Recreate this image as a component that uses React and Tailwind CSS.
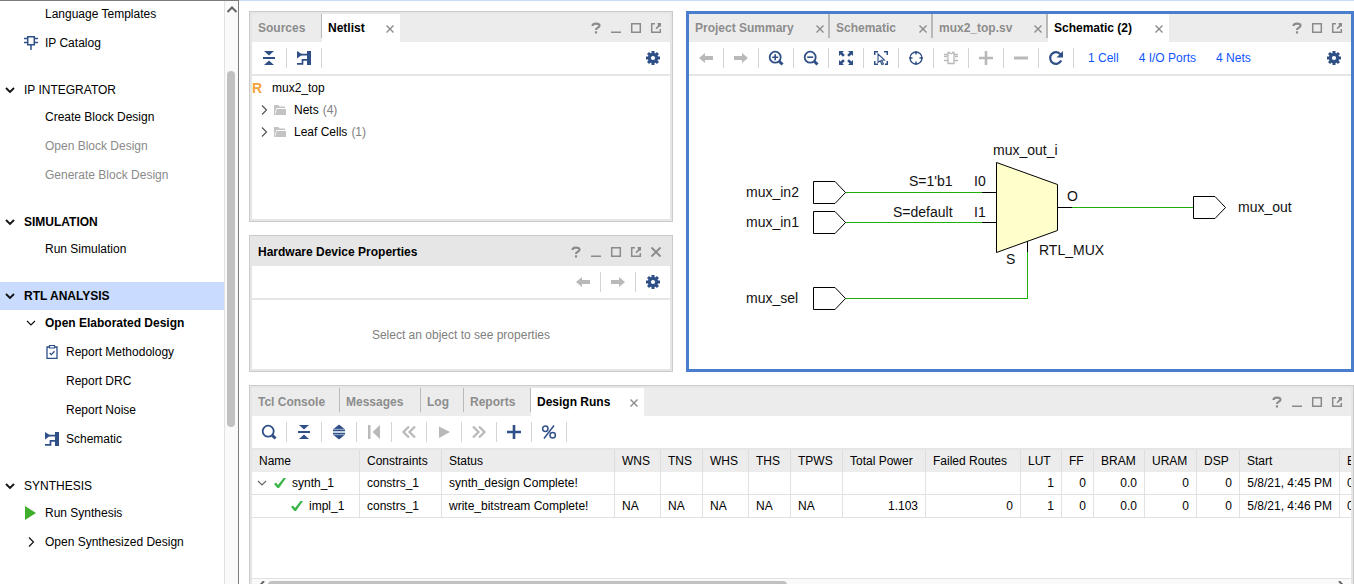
import React from "react";

const NAVY = "#2f4f87";
const GRAY = "#b9b9b9";

function Svg({ size = 16, className = "", children }) {
  return (
    <svg width={size} height={size} viewBox={`0 0 ${size} ${size}`} className={`block shrink-0 ${className}`} aria-hidden="true">
      {children}
    </svg>
  );
}

/* ---------- icons ---------- */

const Chevron = ({ dir = "down", bold = false, color = "#111" }) => (
  <Svg size={12}>
    <path
      d={dir === "down" ? "M2 4l4 4 4-4" : "M4 1.5L8.5 6 4 10.5"}
      fill="none"
      stroke={color}
      strokeWidth={bold ? 1.8 : 1.2}
    />
  </Svg>
);

const ChipIcon = ({ color = NAVY, pin = false }) => (
  <Svg>
    {pin ? (
      <path d="M4.700 1.700h6.600v8H4.700zM1 3.500h4M1 7.500h4M11 3.500h4M11 7.500h4M8 10v5" fill="none" stroke={color} strokeWidth="1.500" />
    ) : (
      <path d="M5 2.500h1.500c0 1.600 3 1.600 3 0H11v11H5zM1 4.500h4M1 6.500h3M1 10.500h4M11 4.500h4M12 6.500h3M11 10.500h4" fill="none" stroke={color} strokeWidth="1.300" />
    )}
  </Svg>
);

const ClipboardIcon = () => (
  <Svg>
    <path d="M3 3h10v11.300H3z" fill="none" stroke={NAVY} strokeWidth="1.300" />
    <path d="M5.500 1.500h5v2.500h-5z" fill="#fff" stroke={NAVY} strokeWidth="1.200" />
    <path d="M5.700 9l1.600 1.600 3.200-3.400" fill="none" stroke={NAVY} strokeWidth="1.300" />
  </Svg>
);

const SchematicIcon = () => (
  <Svg>
    <path d="M1 1l5.500 3.500L1 8.500z" fill={NAVY} />
    <path d="M11 1h4v14h-4z" fill={NAVY} />
    <path d="M5 4.700h6.500M1 13.800h5.500V9.800h5" fill="none" stroke={NAVY} strokeWidth="1.700" />
  </Svg>
);

const PlayIcon = ({ color = "#3fae2a", small = false }) => (
  <Svg>
    <path d={small ? "M3 2.500l11 5.500-11 6z" : "M2 1l11 7-11 7z"} fill={color} />
  </Svg>
);

const CollapseIcon = () => (
  <Svg>
    <path d="M3 1h10L8 5.500zM3 15h10L8 10.500zM2 7h12v2H2z" fill={NAVY} />
  </Svg>
);

const ExpandIcon = () => (
  <Svg>
    <path d="M8 .5L13.500 5h-11zM8 15.500L13.500 11h-11zM2 5.500h12v2H2zM2 8.500h12v2H2z" fill={NAVY} />
    <path d="M2 8h12" stroke="#fff" strokeWidth="1" />
    <path d="M2 5.200h12M2 10.800h12" stroke="#8fa2c2" strokeWidth=".6" />
  </Svg>
);

const GearIcon = () => (
  <Svg>
    <g fill={NAVY}>
      <path d="M6.500 1h3v14h-3z" />
      <path d="M6.500 1h3v14h-3z" transform="rotate(45 8 8)" />
      <path d="M6.500 1h3v14h-3z" transform="rotate(90 8 8)" />
      <path d="M6.500 1h3v14h-3z" transform="rotate(135 8 8)" />
      <circle cx="8" cy="8" r="5.200" />
    </g>
    <circle cx="8" cy="8" r="2.100" fill="#fff" />
  </Svg>
);

const ArrowIcon = ({ dir }) => (
  <Svg>
    <path d={dir === "left" ? "M1 8l6-5v3h8v4H7v3z" : "M15 8L9 3v3H1v4h8v3z"} fill={GRAY} />
  </Svg>
);

const MagnifierIcon = ({ mark }) => (
  <Svg>
    <circle cx="7.200" cy="7.200" r="5.500" fill="none" stroke={NAVY} strokeWidth="1.800" />
    <path d="M11.200 11.200l3.300 3.300" stroke={NAVY} strokeWidth="3" />
    {mark === "plus" && <path d="M7.200 4.200v6M4.200 7.200h6" stroke={NAVY} strokeWidth="1.600" />}
    {mark === "minus" && <path d="M4.200 7.200h6" stroke={NAVY} strokeWidth="1.600" />}
  </Svg>
);

const FitIcon = () => (
  <Svg>
    <path
      d="M1 1h5L4.400 2.600 6.800 5 5 6.800 2.600 4.400 1 6zM15 1v5l-1.600-1.600L11 6.800 9.200 5l2.400-2.400L10 1zM1 15v-5l1.600 1.600L5 9.200 6.800 11l-2.400 2.400L6 15zM15 15h-5l1.600-1.600L9.200 11 11 9.200l2.400 2.400L15 10z"
      fill={NAVY}
    />
  </Svg>
);

const SelectAreaIcon = () => (
  <Svg>
    <path d="M1.700 5V1.700H5M11 1.700h3.300V5M1.700 11v3.300H5M14.300 11v3.300H12" fill="none" stroke={NAVY} strokeWidth="1.500" />
    <path d="M5 4l6.500 6-3 .3 2 3.700-1.500.6-1.800-3.700L5 12.500z" fill="none" stroke={NAVY} strokeWidth="1.100" />
  </Svg>
);

const TargetIcon = () => (
  <Svg>
    <circle cx="8" cy="8" r="6" fill="none" stroke={NAVY} strokeWidth="1.300" />
    <path d="M8 1v3.500M8 11.500V15M1 8h3.500M11.500 8H15" stroke={NAVY} strokeWidth="1.500" />
  </Svg>
);

const PlusIcon = ({ color }) => (
  <Svg>
    <path d="M6.700 1h2.600v5.700H15v2.600H9.300V15H6.700V9.300H1V6.700h5.700z" fill={color} />
  </Svg>
);

const MinusIcon = () => (
  <Svg>
    <path d="M1 6.500h14v3H1z" fill={GRAY} />
  </Svg>
);

const ReloadIcon = () => (
  <Svg>
    <path d="M12.500 4.400A5.800 5.800 0 1 0 13.200 10.500" fill="none" stroke={NAVY} strokeWidth="2.200" />
    <path d="M15 1v6.500H8.500z" fill={NAVY} />
  </Svg>
);

const FirstIcon = () => (
  <Svg>
    <path d="M2 1h2.500v14H2zM14 1v14L6.500 8z" fill={GRAY} />
  </Svg>
);

const DoubleChevron = ({ dir }) => (
  <Svg>
    <path
      d={dir === "left" ? "M8 2.500L2.500 8 8 13.500M14 2.500L8.500 8l5.500 5.500" : "M2 2.500L7.500 8 2 13.500M8 2.500L13.500 8 8 13.500"}
      fill="none"
      stroke={GRAY}
      strokeWidth="2.200"
    />
  </Svg>
);

const PercentIcon = () => (
  <Svg>
    <circle cx="4.300" cy="4.700" r="2.700" fill="none" stroke={NAVY} strokeWidth="1.500" />
    <circle cx="11.700" cy="11.300" r="2.700" fill="none" stroke={NAVY} strokeWidth="1.500" />
    <path d="M13 1.500L3 14.500" stroke={NAVY} strokeWidth="1.500" />
  </Svg>
);

const FolderIcon = () => (
  <Svg size={12}>
    <path d="M0 1h4.500l1 1.500H11V4H2.500L1 8v3H0z" fill="#c3c3c3" />
    <path d="M2.800 5H12v6H1z" fill="#c3c3c3" />
  </Svg>
);

const CheckIcon = () => (
  <Svg size={12}>
    <path d="M0 7l2-1.500 2 2.500L9.500 1H12L5 11H3.500z" fill="#39b54a" />
  </Svg>
);

const CloseIcon = ({ large = false }) => (
  <Svg size={12}>
    <path
      d={large ? "M1.500 1.500l9 9M10.500 1.500l-9 9" : "M2.500 2.500l7 7M9.500 2.500l-7 7"}
      stroke="#8a8a8a"
      strokeWidth={large ? 1.8 : 1.4}
    />
  </Svg>
);

const windowGlyphs = {
  Help: (
    <Svg size={12}>
      <path d="M2.500 4C2.500 .8 9.500.8 9.500 3.700 9.500 5.700 6 5.600 6 8" fill="none" stroke="#8a8a8a" strokeWidth="2.200" />
      <path d="M4.900 9.300h2.200v2.200H4.900z" fill="#8a8a8a" />
    </Svg>
  ),
  Minimize: (
    <Svg size={12}>
      <path d="M1 9.500h10v1.500H1z" fill="#8a8a8a" />
    </Svg>
  ),
  Maximize: (
    <Svg size={12}>
      <path d="M1.700 1.700h8.600v8.600H1.700z" fill="none" stroke="#8a8a8a" strokeWidth="1.500" />
    </Svg>
  ),
  "Pop out": (
    <Svg size={12}>
      <path d="M5 1.700H1.700v8.600h8.600V7" fill="none" stroke="#8a8a8a" strokeWidth="1.500" />
      <path d="M7.500 1H11v3.500H9.700L6.500 7.200l-1-1L8 3.500z" fill="#8a8a8a" />
    </Svg>
  ),
  Close: <CloseIcon large />,
};

/* ---------- shared panel parts ---------- */

function WindowButtons({ names }) {
  return (
    <div className="ml-auto flex items-center pr-1">
      {names.map((n) => (
        <button key={n} type="button" aria-label={n} className="flex h-5 w-5 items-center justify-center">
          {windowGlyphs[n]}
        </button>
      ))}
    </div>
  );
}

function Tab({ label, width, active = false, closable = false, wide = false }) {
  return (
    <div className={`relative flex h-7 shrink-0 items-center pl-[6px] ${width} ${active ? "bg-white text-black" : "text-[#8c8c8c]"}`}>
      <button type="button" role="tab" aria-selected={active} className="whitespace-nowrap font-bold">
        {label}
      </button>
      {closable && (
        <button type="button" aria-label={`Close ${label}`} className="ml-auto pr-1 pt-[2px]">
          <CloseIcon />
        </button>
      )}
      {!active && <span className={`absolute right-0 top-0 h-6 bg-[#b9b9b9] ${wide ? "w-[2px]" : "w-px"}`} />}
    </div>
  );
}

function Tool({ label, children, last = false }) {
  return (
    <div className="flex items-center">
      <button type="button" aria-label={label} className="flex h-8 w-[34px] items-center justify-center">
        {children}
      </button>
      {!last && <span className="h-5 w-px bg-[#d4d4d4]" />}
    </div>
  );
}

function Panel({ className = "", active = false, header, toolbar, children }) {
  return (
    <section className={`flex min-w-0 flex-col ${active ? "border-[3px] border-[#4a7dcb]" : "border border-[#cbcbcb]"} ${className}`}>
      <div className={`flex min-h-0 flex-1 flex-col ${active ? "" : "border-2 border-[#e6e6e6]"}`}>
        {header}
        <div className="flex h-[34px] shrink-0 items-center border-b-2 border-[#e6e6e6]">{toolbar}</div>
        {children}
      </div>
    </section>
  );
}

/* ---------- flow navigator ---------- */

const topItems = [
  { label: "Language Templates" },
  { label: "IP Catalog", icon: <ChipIcon pin /> },
];

const groups = [
  {
    label: "IP INTEGRATOR",
    items: [
      { label: "Create Block Design" },
      { label: "Open Block Design", disabled: true },
      { label: "Generate Block Design", disabled: true },
    ],
  },
  { label: "SIMULATION", bold: true, items: [{ label: "Run Simulation" }] },
  {
    label: "RTL ANALYSIS",
    bold: true,
    selected: true,
    items: [
      { label: "Open Elaborated Design", bold: true, icon: <Chevron /> },
      { label: "Report Methodology", sub: true, icon: <ClipboardIcon /> },
      { label: "Report DRC", sub: true },
      { label: "Report Noise", sub: true },
      { label: "Schematic", sub: true, icon: <SchematicIcon /> },
    ],
  },
  {
    label: "SYNTHESIS",
    items: [
      { label: "Run Synthesis", icon: <PlayIcon /> },
      { label: "Open Synthesized Design", icon: <Chevron dir="right" /> },
    ],
  },
];

function NavItem({ item }) {
  return (
    <li>
      <button
        type="button"
        disabled={item.disabled}
        className={`flex h-[26px] w-full items-center whitespace-nowrap ${item.sub ? "pl-[42px]" : "pl-[21px]"} ${item.bold ? "font-bold" : ""} ${item.disabled ? "text-[#8a8a8a]" : "text-black"}`}
      >
        <span className="flex w-5 shrink-0 justify-center">{item.icon}</span>
        <span className="pl-1">{item.label}</span>
      </button>
    </li>
  );
}

function Sidebar() {
  return (
    <aside className="flex w-[239px] shrink-0 overflow-hidden border-r border-t border-[#7c7c7c] bg-white">
      <nav className="flex min-w-0 flex-1 flex-col gap-5">
        <ul className="flex flex-col gap-[3px]">
          {topItems.map((i) => (
            <NavItem key={i.label} item={i} />
          ))}
        </ul>
        {groups.map((g) => (
          <div key={g.label}>
            <button
              type="button"
              className={`flex h-7 w-full items-center gap-2 pl-1 ${g.bold ? "font-bold" : ""} ${g.selected ? "bg-[#c9dcff]" : ""}`}
            >
              <Chevron bold />
              {g.label}
            </button>
            <ul className="flex flex-col gap-[3px]">
              {g.items.map((i) => (
                <NavItem key={i.label} item={i} />
              ))}
            </ul>
          </div>
        ))}
      </nav>
      <div className="flex w-[14px] shrink-0 flex-col border-l border-[#e2e2e2] bg-[#fafafa] pl-[2px] pt-[2px]">
        <Svg size={12}>
          <path d="M.5 9L5 4.500 9.500 9" fill="none" stroke="#666" strokeWidth="2" />
        </Svg>
        <div className="mt-14 h-[356px] w-2 rounded-full bg-[#c1c1c1]" />
      </div>
    </aside>
  );
}

/* ---------- panels ---------- */

function NetlistPanel() {
  return (
    <Panel
      className="min-h-0 flex-1"
      header={
        <div className="flex h-7 shrink-0 bg-[#ececec]" role="tablist">
          <Tab label="Sources" width="w-[70px]" />
          <Tab label="Netlist" width="w-[78px]" active closable />
          <WindowButtons names={["Help", "Minimize", "Maximize", "Pop out"]} />
        </div>
      }
      toolbar={
        <>
          <Tool label="Collapse all"><CollapseIcon /></Tool>
          <Tool label="Schematic"><SchematicIcon /></Tool>
          <div className="ml-auto"><Tool label="Settings" last><GearIcon /></Tool></div>
        </>
      }
    >
      <ul className="pt-px">
        <li className="flex h-[22px] items-center">
          <span className="w-5 text-sm font-bold text-[#f5a33b]">R</span>
          mux2_top
        </li>
        {[["Nets", "(4)"], ["Leaf Cells", "(1)"]].map(([name, count]) => (
          <li key={name} className="flex h-[22px] items-center pl-[6px]">
            <Chevron dir="right" color="#555" />
            <span className="pl-1 pr-2"><FolderIcon /></span>
            {name}
            <span className="pl-1 text-[#808080]">{count}</span>
          </li>
        ))}
      </ul>
    </Panel>
  );
}

function HardwarePanel() {
  return (
    <Panel
      className="h-[137px] shrink-0"
      header={
        <div className="flex h-7 shrink-0 items-center bg-[#e6e6e6] pl-[6px]">
          <h2 className="font-bold">Hardware Device Properties</h2>
          <WindowButtons names={["Help", "Minimize", "Maximize", "Pop out", "Close"]} />
        </div>
      }
      toolbar={
        <div className="ml-auto flex">
          <Tool label="Back"><ArrowIcon dir="left" /></Tool>
          <Tool label="Forward"><ArrowIcon dir="right" /></Tool>
          <Tool label="Settings" last><GearIcon /></Tool>
        </div>
      }
    >
      <div className="flex flex-1 items-center justify-center text-[#808080]">Select an object to see properties</div>
    </Panel>
  );
}

function Port({ x, y }) {
  return <path d={`M${x} ${y - 11}h21.500l10.500 11-10.500 11h-21.500z`} fill="#fff" stroke="#000" />;
}

function Diagram() {
  return (
    <svg viewBox="689 76 662 293" className="block min-h-0 w-full flex-1" role="img" aria-label="mux2_top schematic">
      <path
        d="M845 192.500H982M845 222.500H982M845 298.500H1027.500V251M1072 207.500H1193"
        fill="none"
        stroke="#1fae0c"
        shapeRendering="crispEdges"
      />
      <path d="M996.500 162.500L1057.500 184.500V230.500L996.500 252.500z" fill="#ffffcc" stroke="#000" />
      <path d="M982 192.500H996M982 222.500H996M1058 207.500H1072M1027.500 241V252" stroke="#000" fill="none" />
      <Port x={813.5} y={192.5} />
      <Port x={813.5} y={222.5} />
      <Port x={813.5} y={298.5} />
      <Port x={1193.5} y={207.5} />
      <g className="text-sm" fill="#111">
        <text x="746" y="197">mux_in2</text>
        <text x="746" y="227">mux_in1</text>
        <text x="746" y="303">mux_sel</text>
        <text x="909" y="186">S=1'b1</text>
        <text x="893" y="217">S=default</text>
        <text x="974" y="186">I0</text>
        <text x="974" y="217">I1</text>
        <text x="993" y="155">mux_out_i</text>
        <text x="1067" y="201">O</text>
        <text x="1006" y="264">S</text>
        <text x="1039" y="255">RTL_MUX</text>
        <text x="1238" y="212">mux_out</text>
      </g>
    </svg>
  );
}

function SchematicPanel() {
  return (
    <Panel
      active
      className="flex-1"
      header={
        <div className="flex h-7 shrink-0 bg-[#ececec]" role="tablist">
          <Tab label="Project Summary" width="w-[141px]" closable wide />
          <Tab label="Schematic" width="w-[103px]" closable wide />
          <Tab label="mux2_top.sv" width="w-[115px]" closable wide />
          <Tab label="Schematic (2)" width="w-[121px]" active closable />
          <WindowButtons names={["Help", "Maximize", "Pop out"]} />
        </div>
      }
      toolbar={
        <>
          <Tool label="Back"><ArrowIcon dir="left" /></Tool>
          <Tool label="Forward"><ArrowIcon dir="right" /></Tool>
          <Tool label="Zoom in"><MagnifierIcon mark="plus" /></Tool>
          <Tool label="Zoom out"><MagnifierIcon mark="minus" /></Tool>
          <Tool label="Zoom fit"><FitIcon /></Tool>
          <Tool label="Select area"><SelectAreaIcon /></Tool>
          <Tool label="Auto-fit selection"><TargetIcon /></Tool>
          <Tool label="Cell"><ChipIcon color={GRAY} /></Tool>
          <Tool label="Add"><PlusIcon color={GRAY} /></Tool>
          <Tool label="Remove"><MinusIcon /></Tool>
          <Tool label="Regenerate"><ReloadIcon /></Tool>
          <div className="flex gap-5 whitespace-nowrap pl-[14px] text-[#0f55ff]">
            <a href="#cell">1 Cell</a>
            <a href="#ports">4 I/O Ports</a>
            <a href="#nets">4 Nets</a>
          </div>
          <div className="ml-auto"><Tool label="Settings" last><GearIcon /></Tool></div>
        </>
      }
    >
      <Diagram />
    </Panel>
  );
}

const columns = [
  ["Name", "w-[108px]"],
  ["Constraints", "w-[82px]"],
  ["Status", "w-[173px]"],
  ["WNS", "w-[46px]"],
  ["TNS", "w-[42px]"],
  ["WHS", "w-[46px]"],
  ["THS", "w-[42px]"],
  ["TPWS", "w-[52px]"],
  ["Total Power", "w-[83px]"],
  ["Failed Routes", "w-[95px]"],
  ["LUT", "w-[41px]"],
  ["FF", "w-[32px]"],
  ["BRAM", "w-[51px]"],
  ["URAM", "w-[52px]"],
  ["DSP", "w-[43px]"],
  ["Start", "w-[100px]"],
  ["Elapsed", "w-[72px]"],
];

const runs = [
  ["synth_1", "constrs_1", "synth_design Complete!", "", "", "", "", "", "", "", "1", "0", "0.0", "0", "0", "5/8/21, 4:45 PM", "00:00:24"],
  ["impl_1", "constrs_1", "write_bitstream Complete!", "NA", "NA", "NA", "NA", "NA", "1.103", "0", "1", "0", "0.0", "0", "0", "5/8/21, 4:46 PM", "00:01:12"],
];

function RunsTable() {
  return (
    <div className="min-h-0 flex-1 overflow-hidden">
      <table className="w-[1160px] table-fixed border-separate border-spacing-0">
        <thead>
          <tr className="bg-[#ececec]">
            {columns.map(([name, width]) => (
              <th key={name} className={`h-[22px] whitespace-nowrap border-r border-[#dedede] p-0 pl-[7px] text-left font-normal ${width}`}>
                {name}
              </th>
            ))}
          </tr>
        </thead>
        <tbody>
          {runs.map((run, r) => (
            <tr key={run[0]}>
              {run.map((value, c) => (
                <td
                  key={columns[c][0]}
                  className={`h-[23px] whitespace-nowrap border-b border-r border-[#e2e2e2] p-0 ${c >= 8 && c <= 15 ? "pr-[7px] text-right" : c === 0 ? "" : "pl-[7px] text-left"}`}
                >
                  {c === 0 ? (
                    <div className={`flex items-center gap-[6px] ${r === 0 ? "pl-1" : "pl-[39px]"}`}>
                      {r === 0 && (
                        <button type="button" aria-label="Collapse synth_1"><Chevron color="#666" /></button>
                      )}
                      <CheckIcon />
                      {value}
                    </div>
                  ) : (
                    value
                  )}
                </td>
              ))}
            </tr>
          ))}
        </tbody>
      </table>
    </div>
  );
}

function RunsPanel() {
  return (
    <Panel
      className="h-[211px] shrink-0"
      header={
        <div className="flex h-7 shrink-0 bg-[#ececec]" role="tablist">
          <Tab label="Tcl Console" width="w-[88px]" />
          <Tab label="Messages" width="w-[81px]" />
          <Tab label="Log" width="w-[43px]" />
          <Tab label="Reports" width="w-[67px]" />
          <Tab label="Design Runs" width="w-[113px]" active closable />
          <WindowButtons names={["Help", "Minimize", "Maximize", "Pop out"]} />
        </div>
      }
      toolbar={
        <>
          <Tool label="Search"><MagnifierIcon /></Tool>
          <Tool label="Collapse all"><CollapseIcon /></Tool>
          <Tool label="Expand all"><ExpandIcon /></Tool>
          <Tool label="First"><FirstIcon /></Tool>
          <Tool label="Previous"><DoubleChevron dir="left" /></Tool>
          <Tool label="Run"><PlayIcon color={GRAY} small /></Tool>
          <Tool label="Next"><DoubleChevron dir="right" /></Tool>
          <Tool label="Create run"><PlusIcon color={NAVY} /></Tool>
          <Tool label="Show percentage"><PercentIcon /></Tool>
        </>
      }
    >
      <RunsTable />
      <div className="flex h-[15px] shrink-0 items-start border-t border-[#e2e2e2] bg-[#fafafa] px-1 pt-[2px]">
        <Svg size={12}>
          <path d="M8 0L3.500 5 8 10" fill="none" stroke="#666" strokeWidth="2" />
        </Svg>
        <div className="mr-auto h-2 w-[519px] rounded-full bg-[#c1c1c1]" />
        <Svg size={12}>
          <path d="M4 0l4.500 5L4 10" fill="none" stroke="#666" strokeWidth="2" />
        </Svg>
      </div>
    </Panel>
  );
}

export default function App() {
  return (
    <div className="flex h-screen overflow-hidden bg-white font-['Liberation_Sans',Arial,sans-serif] text-xs text-black">
      <Sidebar />
      <main className="flex min-w-0 flex-1 flex-col gap-[13px] border-t border-[#c9dcff] pl-[10px] pt-[10px]">
        <div className="flex min-h-0 flex-1 gap-[13px]">
          <div className="flex w-[424px] shrink-0 flex-col gap-[13px]">
            <NetlistPanel />
            <HardwarePanel />
          </div>
          <SchematicPanel />
        </div>
        <div className="-mb-3 flex shrink-0 flex-col">
          <RunsPanel />
        </div>
      </main>
    </div>
  );
}
